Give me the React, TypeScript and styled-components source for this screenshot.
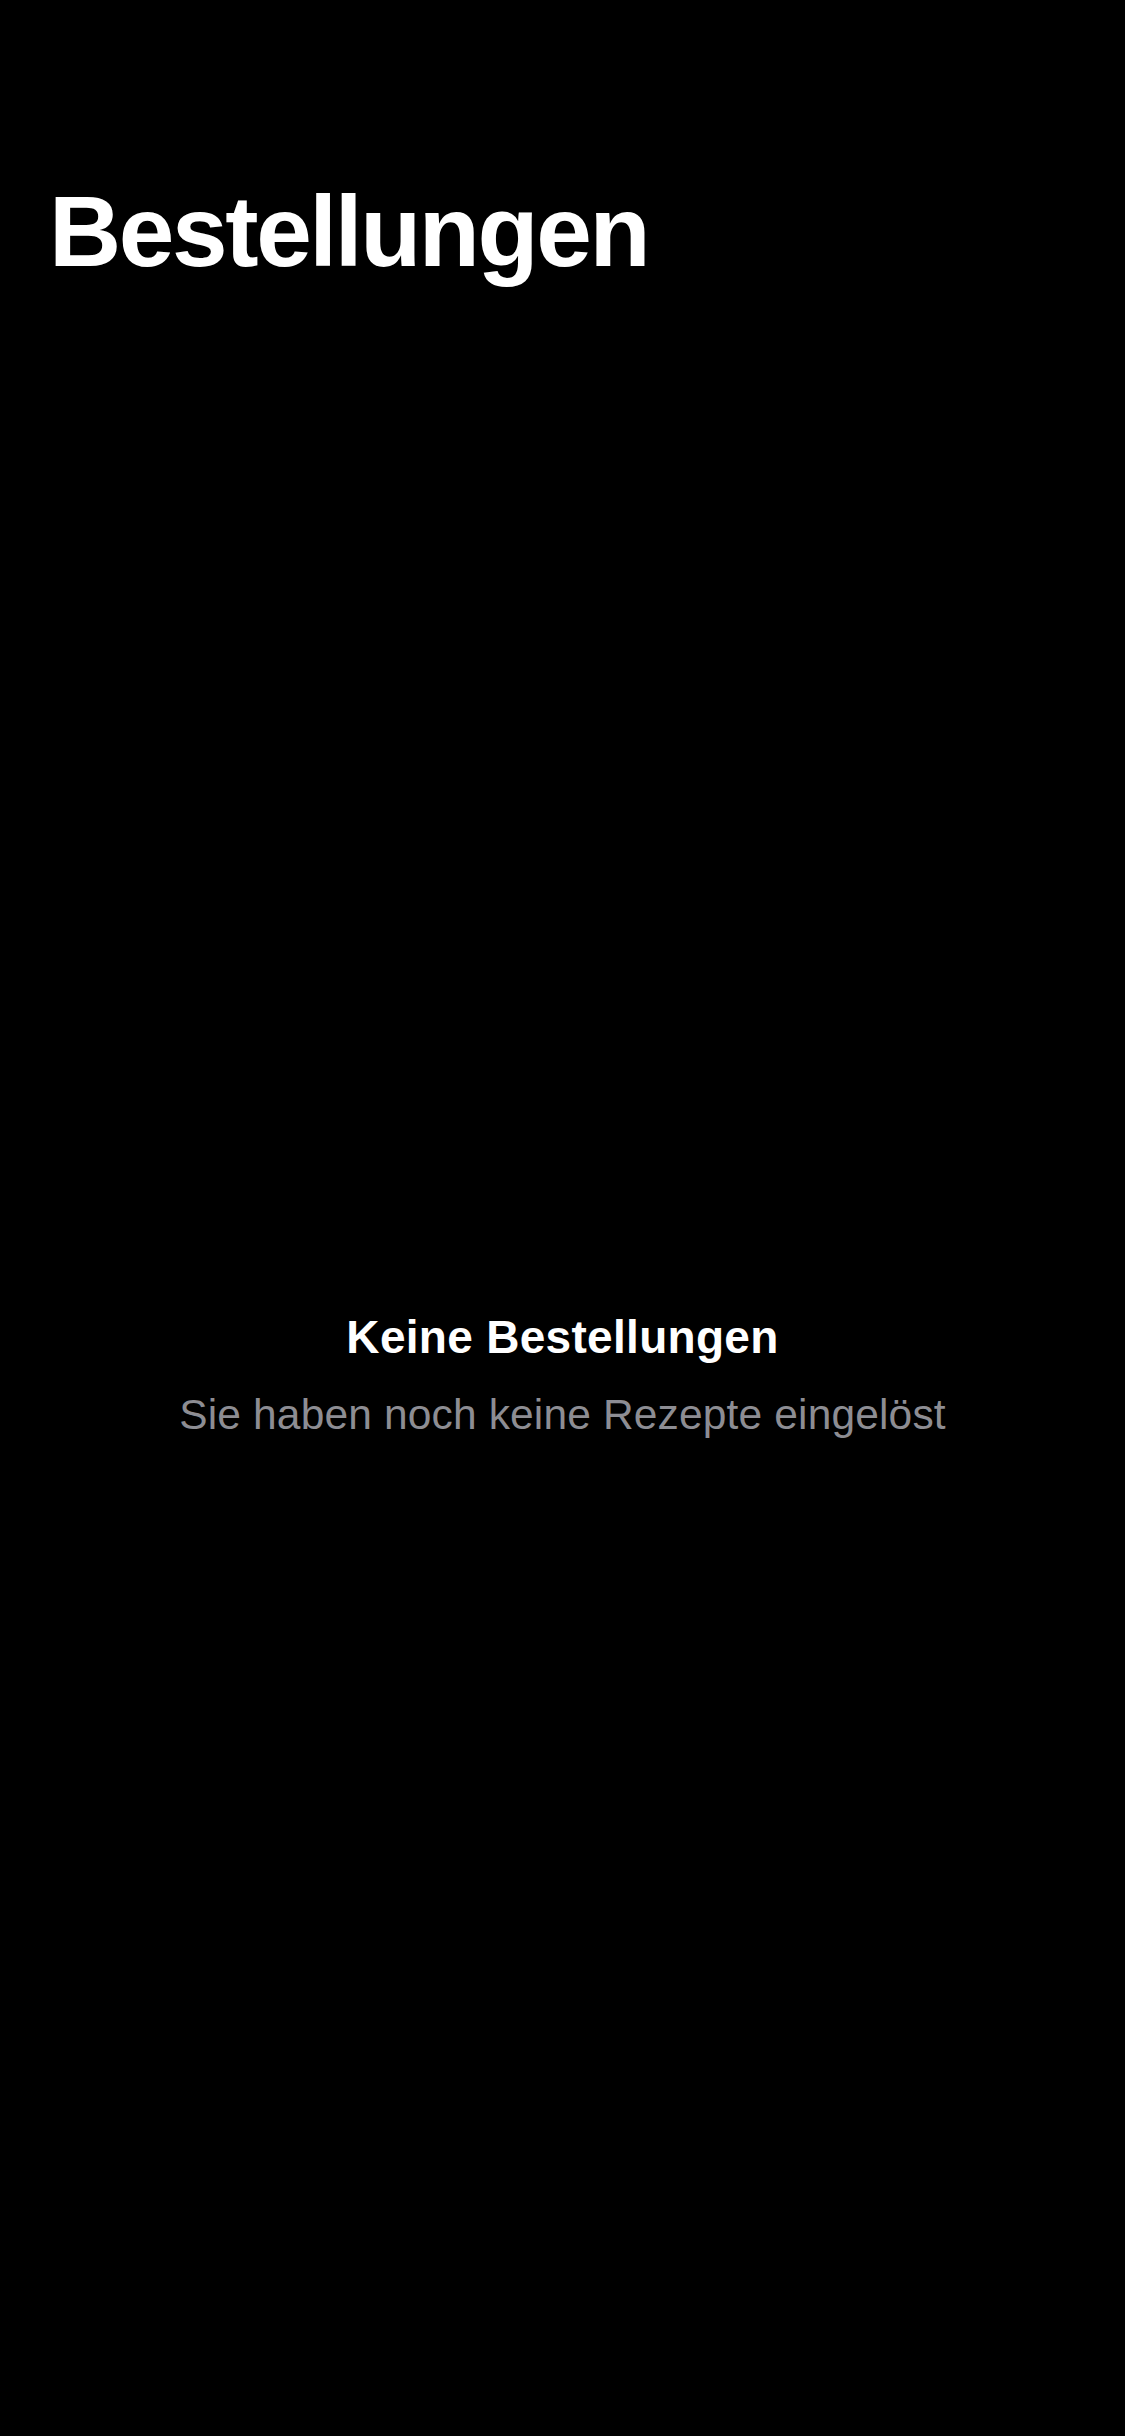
import React from "react";
import styled, { createGlobalStyle } from "styled-components";

const GlobalStyle = createGlobalStyle`
  html, body {
    margin: 0;
    padding: 0;
    background: #000000;
  }
  body {
    font-family: "Liberation Sans", Arial, sans-serif;
    -webkit-font-smoothing: antialiased;
  }
`;

const Screen = styled.div`
  min-height: 2436px;
  width: 1125px;
  background: #000000;
  display: flex;
  flex-direction: column;
`;

const Header = styled.header`
  padding: 171px 49px 0 49px;
`;

const LargeTitle = styled.h1`
  margin: 0;
  color: #ffffff;
  font-family: "Liberation Sans", Arial, sans-serif;
  font-weight: 700;
  font-size: 100px;
  line-height: 120px;
  letter-spacing: -2.4px;
`;

const EmptyState = styled.section`
  display: flex;
  flex-direction: column;
  align-items: center;
  gap: 24px;
  padding-top: 1018px;
  text-align: center;
`;

const EmptyTitle = styled.h2`
  margin: 0;
  color: #ffffff;
  font-family: "Liberation Sans", Arial, sans-serif;
  font-weight: 700;
  font-size: 46px;
  line-height: 56px;
  letter-spacing: 0.3px;
`;

const EmptyText = styled.p`
  margin: 0;
  color: #8d8d93;
  font-family: "Liberation Sans", Arial, sans-serif;
  font-weight: 400;
  font-size: 42.5px;
  line-height: 52px;
  letter-spacing: 0.15px;
`;

export default function App() {
  return (
    <>
      <GlobalStyle />
      <Screen>
        <Header>
          <LargeTitle>Bestellungen</LargeTitle>
        </Header>
        <EmptyState>
          <EmptyTitle>Keine Bestellungen</EmptyTitle>
          <EmptyText>Sie haben noch keine Rezepte eingelöst</EmptyText>
        </EmptyState>
      </Screen>
    </>
  );
}
